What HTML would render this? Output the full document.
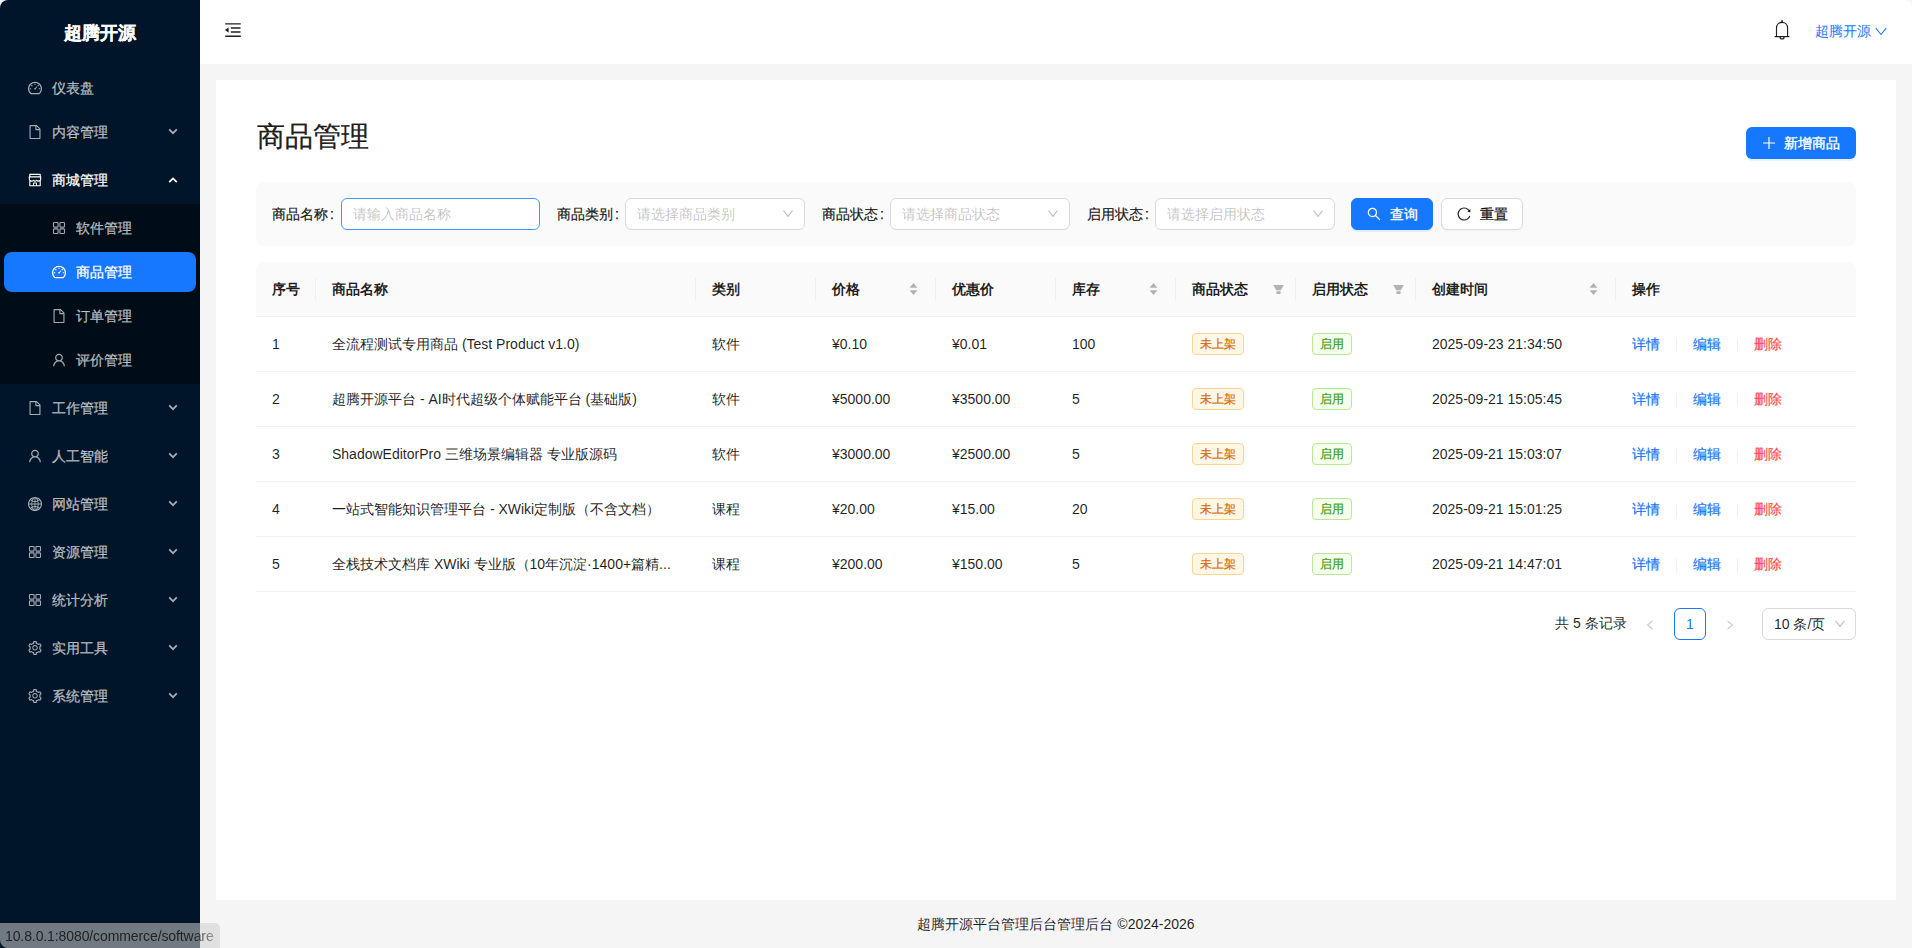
<!DOCTYPE html>
<html><head><meta charset="utf-8">
<style>
*{box-sizing:border-box;margin:0;padding:0}
html,body{width:1912px;height:948px;overflow:hidden;background:#f5f5f5;font-family:"Liberation Sans",sans-serif;font-size:14px;color:rgba(0,0,0,0.88)}
.abs{position:absolute}
svg{display:block}
#side{position:absolute;left:0;top:0;width:200px;height:948px;background:#001529;border-top-left-radius:8px;overflow:hidden}
#logo{position:absolute;left:0;top:0.5px;width:200px;height:64px;line-height:64px;text-align:center;color:#fff;font-size:18px;font-weight:bold;-webkit-text-stroke:0.2px #fff}
.mi{position:absolute;left:4px;width:192px;height:40px;line-height:40px;color:rgba(255,255,255,0.65);font-size:14px;-webkit-text-stroke:0.25px currentColor;border-radius:8px}
.mi .tx{position:absolute;top:0}
.mi.sel{background:#1677ff;color:#fff}
.mi.open{color:#fff}
#subbg{position:absolute;left:0;top:204px;width:200px;height:180px;background:#000c17}
#hdr{position:absolute;left:200px;top:0;width:1712px;height:64px;background:#fff;border-top-right-radius:8px}
#uname{position:absolute;left:1614.5px;top:20px;line-height:22px;color:#1677ff;font-size:14px}
#card{position:absolute;left:216px;top:80px;width:1680px;height:820px;background:#fff}
#title{position:absolute;left:41px;top:37px;font-size:28px;line-height:40px;color:rgba(0,0,0,0.88);-webkit-text-stroke:0.3px rgba(0,0,0,0.88)}
#addbtn{position:absolute;left:1530px;top:47px;width:110px;height:32px;background:#1677ff;border-radius:6px;color:#fff;line-height:32px;box-shadow:0 2px 0 rgba(5,145,255,0.1)}
#form{position:absolute;left:40px;top:102px;width:1600px;height:64px;background:#fafafa;border-radius:8px}
.lbl{position:absolute;top:21px;line-height:22px;color:rgba(0,0,0,0.88);-webkit-text-stroke:0.25px rgba(0,0,0,0.88)}
.inp{position:absolute;top:16px;height:32px;border:1px solid #d9d9d9;border-radius:6px;background:#fff}
.inp.focus{border-color:#4096ff}
.ph{position:absolute;left:11px;top:4px;line-height:22px;color:rgba(0,0,0,0.25)}
.btn{position:absolute;top:16px;height:32px;border-radius:6px;line-height:30px}
.bt{position:absolute;top:-0.5px;-webkit-text-stroke:0.3px currentColor}
.btn.pri{background:#1677ff;color:#fff;border:1px solid #1677ff;box-shadow:0 2px 0 rgba(5,145,255,0.1)}
.btn.def{background:#fff;border:1px solid #d9d9d9;color:rgba(0,0,0,0.88);box-shadow:0 2px 0 rgba(0,0,0,0.02)}
#table{position:absolute;left:40px;top:182px;width:1600px;height:330px}
#thead{position:absolute;left:0;top:0;width:1600px;height:55px;background:#fafafa;border-bottom:1px solid #f0f0f0;border-radius:8px 8px 0 0}
.th{position:absolute;top:16px;line-height:22px;font-weight:bold;color:rgba(0,0,0,0.88)}
.sep{position:absolute;top:16px;width:1px;height:22px;background:#f0f0f0}
.tr{position:absolute;left:0;width:1600px;height:55px;border-bottom:1px solid #f0f0f0}
.td{position:absolute;top:16px;line-height:22px;white-space:nowrap}
.link{color:#1677ff;-webkit-text-stroke:0.2px currentColor}
.link.red{color:#ff4d4f}
.vdiv{position:absolute;top:22px;width:1px;height:13px;background:rgba(5,5,5,0.06)}
.tag{position:absolute;top:16px;height:22px;line-height:20px;padding:0 7px;font-size:12px;border:1px solid;border-radius:4px;-webkit-text-stroke:0.2px currentColor}
.tag.orange{color:#d46b08;background:#fff7e6;border-color:#ffd591}
.tag.green{color:#389e0d;background:#f6ffed;border-color:#b7eb8f}
#pager{position:absolute;left:0;top:0}
.pg{position:absolute;line-height:22px}
#footer{position:absolute;left:200px;top:900px;width:1712px;height:48px;line-height:48px;text-align:center;font-size:14px;color:rgba(0,0,0,0.88)}
#status{position:absolute;left:0;top:923px;width:220px;height:25px;background:rgba(205,205,205,0.55);border-top-right-radius:5px;border-bottom-left-radius:8px;font-size:14px;line-height:26px;padding-left:5px;color:#222;white-space:nowrap;overflow:hidden}
</style></head>
<body>
<div id="side">
  <div id="logo">超腾开源</div>
  <div id="subbg"></div>
<div class="mi" style="top:68px"><svg class="abs" style="left:23px;top:12px;" width="16" height="16" viewBox="0 0 1024 1024" fill="currentColor"><path d="M924.8 385.6a446.7 446.7 0 00-96-142.4 446.7 446.7 0 00-142.4-96C631.1 123.8 572.5 112 512 112s-119.1 11.8-174.4 35.2a446.7 446.7 0 00-142.4 96 446.7 446.7 0 00-96 142.4C75.8 440.9 64 499.5 64 560c0 132.7 58.3 257.7 159.9 343.1l1.7 1.4c5.8 4.8 13.1 7.5 20.6 7.5h531.700c7.5 0 14.8-2.7 20.6-7.5l1.7-1.4C901.7 817.7 960 692.7 960 560c0-60.5-11.9-119.1-35.2-174.4zM761.4 836H262.6A371.12 371.12 0 01140 560c0-99.4 38.7-192.8 109-263 70.3-70.3 163.7-109 263-109 99.4 0 192.8 38.7 263 109 70.3 70.3 109 163.7 109 263 0 105.6-44.5 205.5-122.6 276zM623.5 421.5a8.03 8.03 0 00-11.3 0L527.7 506c-18.7-5-39.4-.2-54.1 14.5a55.95 55.95 0 000 79.2 55.95 55.95 0 0079.2 0 55.87 55.87 0 0014.5-54.1l84.5-84.5c3.1-3.1 3.1-8.2 0-11.3l-28.3-28.3zM490 320h44c4.4 0 8-3.6 8-8v-80c0-4.4-3.600-8-8-8h-44c-4.4 0-8 3.6-8 8v80c0 4.4 3.6 8 8 8zm260 218v44c0 4.4 3.6 8 8 8h80c4.4 0 8-3.6 8-8v-44c0-4.4-3.6-8-8-8h-80c-4.4 0-8 3.6-8 8zm12.7-197.2l-31.1-31.1a8.03 8.03 0 00-11.3 0l-56.6 56.6a8.03 8.03 0 000 11.3l31.1 31.1c3.1 3.1 8.2 3.1 11.3 0l56.6-56.6c3.1-3.1 3.1-8.2 0-11.3zm-458.6-31.1a8.03 8.03 0 00-11.3 0l-31.1 31.1a8.03 8.03 0 000 11.3l56.6 56.6c3.1 3.1 8.2 3.1 11.3 0l31.1-31.1c3.1-3.1 3.1-8.2 0-11.3l-56.6-56.6zM262 530h-80c-4.4 0-8 3.6-8 8v44c0 4.4 3.6 8 8 8h80c4.4 0 8-3.6 8-8v-44c0-4.4-3.6-8-8-8z"/></svg><span class="tx" style="left:48px">仪表盘</span></div>
<div class="mi" style="top:112px"><svg class="abs" style="left:23px;top:12px;" width="16" height="16" viewBox="0 0 1024 1024" fill="currentColor"><path d="M854.6 288.6L639.4 73.4c-6-6-14.1-9.4-22.6-9.4H192c-17.7 0-32 14.3-32 32v832c0 17.7 14.3 32 32 32h640c17.7 0 32-14.3 32-32V311.3c0-8.5-3.4-16.7-9.400-22.7zM790.2 326H602V137.8L790.2 326zm1.8 562H232V136h302v216a42 42 0 0042 42h216v494z"/></svg><span class="tx" style="left:48px">内容管理</span><svg class="abs" style="left:164px;top:15px" width="10" height="9" viewBox="0 0 10 9" fill="none" stroke="currentColor" stroke-width="1.8"><path d="M1.2 2.4 L5 6.2 L8.8 2.4"/></svg></div>
<div class="mi open" style="top:160px"><svg class="abs" style="left:23px;top:12px;" width="16" height="16" viewBox="0 0 1024 1024" fill="currentColor"><path d="M882 272.1V144c0-17.7-14.3-32-32-32H174c-17.7 0-32 14.3-32 32v128.1c-16.7 1-30 14.9-30 31.9v131.7a177 177 0 0014.4 70.4c4.3 10.2 9.6 19.8 15.6 28.9v345c0 17.6 14.3 32 32 32h676c17.7 0 32-14.3 32-32V535a175 175 0 0015.6-28.9c9.5-22.3 14.4-46 14.4-70.4V304c0-17-13.3-30.9-30-31.9zM214 184h596v88H214v-88zm362 656.1H448V736h128v104.1zm234 0H640V704c0-17.7-14.3-32-32-32H416c-17.7 0-32 14.3-32 32v136.1H214V597.9c2.9 1.4 5.9 2.8 9 4 22.3 9.4 46 14.1 70.4 14.1s48-4.7 70.4-14.1c13.8-5.8 26.8-13.2 38.7-22.1.2-.1.4-.1.6 0a180.4 180.4 0 0038.7 22.1c22.3 9.4 46 14.1 70.4 14.1 24.4 0 48-4.7 70.4-14.1 13.8-5.8 26.8-13.2 38.7-22.1.2-.1.4-.1.6 0a180.4 180.4 0 0038.7 22.1c22.3 9.4 46 14.1 70.4 14.1 24.4 0 48-4.7 70.4-14.1 3-1.3 6-2.6 9-4v242.2zm30-404.4c0 59.8-49 108.3-109.3 108.3-40.8 0-76.4-22.1-95.2-54.9-2.9-5-8.1-8.1-13.900-8.1h-.6c-5.7 0-11 3.1-13.9 8.1A109.24 109.24 0 01512 544c-40.7 0-76.2-22-95-54.7-3-5.1-8.4-8.3-14.3-8.3s-11.4 3.2-14.3 8.3a109.63 109.63 0 01-95.1 54.7C233 544 184 495.5 184 435.7v-91.2c0-.3.2-.5.5-.5h655c.3 0 .5.2.5.5v91.2z"/></svg><span class="tx" style="left:48px">商城管理</span><svg class="abs" style="left:164px;top:16px" width="10" height="9" viewBox="0 0 10 9" fill="none" stroke="currentColor" stroke-width="1.8"><path d="M1.2 6.2 L5 2.4 L8.8 6.2"/></svg></div>
<div class="mi" style="top:208px"><svg class="abs" style="left:48px;top:13px" width="14" height="14" viewBox="0 0 14 14" fill="none" stroke="currentColor" stroke-width="1.1"><rect x="1.5" y="1.5" width="4.6" height="4.6" rx="0.8"/><rect x="7.9" y="1.5" width="4.6" height="4.6" rx="0.8"/><rect x="1.5" y="7.9" width="4.6" height="4.6" rx="0.8"/><rect x="7.9" y="7.9" width="4.6" height="4.6" rx="0.8"/></svg><span class="tx" style="left:72px">软件管理</span></div>
<div class="mi sel" style="top:252px"><svg class="abs" style="left:47px;top:12px;" width="16" height="16" viewBox="0 0 1024 1024" fill="currentColor"><path d="M924.8 385.6a446.7 446.7 0 00-96-142.4 446.7 446.7 0 00-142.4-96C631.1 123.8 572.5 112 512 112s-119.1 11.8-174.4 35.2a446.7 446.7 0 00-142.4 96 446.7 446.7 0 00-96 142.4C75.8 440.9 64 499.5 64 560c0 132.7 58.3 257.7 159.9 343.1l1.7 1.4c5.8 4.8 13.1 7.5 20.6 7.5h531.700c7.5 0 14.8-2.7 20.6-7.5l1.7-1.4C901.7 817.7 960 692.7 960 560c0-60.5-11.9-119.1-35.2-174.4zM761.4 836H262.6A371.12 371.12 0 01140 560c0-99.4 38.7-192.8 109-263 70.3-70.3 163.7-109 263-109 99.4 0 192.8 38.7 263 109 70.3 70.3 109 163.7 109 263 0 105.6-44.5 205.5-122.6 276zM623.5 421.5a8.03 8.03 0 00-11.3 0L527.7 506c-18.7-5-39.4-.2-54.1 14.5a55.95 55.95 0 000 79.2 55.95 55.95 0 0079.2 0 55.87 55.87 0 0014.5-54.1l84.5-84.5c3.1-3.1 3.1-8.2 0-11.3l-28.3-28.3zM490 320h44c4.4 0 8-3.6 8-8v-80c0-4.4-3.600-8-8-8h-44c-4.4 0-8 3.6-8 8v80c0 4.4 3.6 8 8 8zm260 218v44c0 4.4 3.6 8 8 8h80c4.4 0 8-3.6 8-8v-44c0-4.4-3.6-8-8-8h-80c-4.4 0-8 3.6-8 8zm12.7-197.2l-31.1-31.1a8.03 8.03 0 00-11.3 0l-56.6 56.6a8.03 8.03 0 000 11.3l31.1 31.1c3.1 3.1 8.2 3.1 11.3 0l56.6-56.6c3.1-3.1 3.1-8.2 0-11.3zm-458.6-31.1a8.03 8.03 0 00-11.3 0l-31.1 31.1a8.03 8.03 0 000 11.3l56.6 56.6c3.1 3.1 8.2 3.1 11.3 0l31.1-31.1c3.1-3.1 3.1-8.2 0-11.3l-56.6-56.6zM262 530h-80c-4.4 0-8 3.6-8 8v44c0 4.4 3.6 8 8 8h80c4.4 0 8-3.6 8-8v-44c0-4.4-3.6-8-8-8z"/></svg><span class="tx" style="left:72px">商品管理</span></div>
<div class="mi" style="top:296px"><svg class="abs" style="left:47px;top:12px;" width="16" height="16" viewBox="0 0 1024 1024" fill="currentColor"><path d="M854.6 288.6L639.4 73.4c-6-6-14.1-9.4-22.6-9.4H192c-17.7 0-32 14.3-32 32v832c0 17.7 14.3 32 32 32h640c17.7 0 32-14.3 32-32V311.3c0-8.5-3.4-16.7-9.400-22.7zM790.2 326H602V137.8L790.2 326zm1.8 562H232V136h302v216a42 42 0 0042 42h216v494z"/></svg><span class="tx" style="left:72px">订单管理</span></div>
<div class="mi" style="top:340px"><svg class="abs" style="left:47px;top:12px;" width="16" height="16" viewBox="0 0 1024 1024" fill="currentColor"><path d="M858.5 763.6a374 374 0 00-80.6-119.5 375.63 375.63 0 00-119.5-80.6c-.4-.2-.8-.3-1.2-.5C719.5 518 760 444.7 760 362c0-137-111-248-248-248S264 225 264 362c0 82.7 40.5 156 102.8 201.1-.4.2-.8.3-1.2.5-44.8 18.9-85 46-119.5 80.6a375.63 375.63 0 00-80.6 119.5A371.7 371.7 0 00136 901.8a8 8 0 008 8.2h60c4.4 0 7.9-3.5 8-7.8 2-77.2 33-149.5 87.8-204.3 56.7-56.7 132-87.9 212.2-87.900s155.5 31.2 212.2 87.9C779 752.7 810 825 812 902.2c.1 4.4 3.6 7.8 8 7.8h60a8 8 0 008-8.2c-1-47.8-10.9-94.3-29.5-138.2zM512 534c-45.9 0-89.1-17.9-121.6-50.4S340 407.900 340 362c0-45.9 17.9-89.1 50.4-121.6S466.1 190 512 190s89.1 17.9 121.6 50.4S684 316.1 684 362c0 45.9-17.9 89.1-50.4 121.6S557.9 534 512 534z"/></svg><span class="tx" style="left:72px">评价管理</span></div>
<div class="mi" style="top:388px"><svg class="abs" style="left:23px;top:12px;" width="16" height="16" viewBox="0 0 1024 1024" fill="currentColor"><path d="M854.6 288.6L639.4 73.4c-6-6-14.1-9.4-22.6-9.4H192c-17.7 0-32 14.3-32 32v832c0 17.7 14.3 32 32 32h640c17.7 0 32-14.3 32-32V311.3c0-8.5-3.4-16.7-9.400-22.7zM790.2 326H602V137.8L790.2 326zm1.8 562H232V136h302v216a42 42 0 0042 42h216v494z"/></svg><span class="tx" style="left:48px">工作管理</span><svg class="abs" style="left:164px;top:15px" width="10" height="9" viewBox="0 0 10 9" fill="none" stroke="currentColor" stroke-width="1.8"><path d="M1.2 2.4 L5 6.2 L8.8 2.4"/></svg></div>
<div class="mi" style="top:436px"><svg class="abs" style="left:23px;top:12px;" width="16" height="16" viewBox="0 0 1024 1024" fill="currentColor"><path d="M858.5 763.6a374 374 0 00-80.6-119.5 375.63 375.63 0 00-119.5-80.6c-.4-.2-.8-.3-1.2-.5C719.5 518 760 444.7 760 362c0-137-111-248-248-248S264 225 264 362c0 82.7 40.5 156 102.8 201.1-.4.2-.8.3-1.2.5-44.8 18.9-85 46-119.5 80.6a375.63 375.63 0 00-80.6 119.5A371.7 371.7 0 00136 901.8a8 8 0 008 8.2h60c4.4 0 7.9-3.5 8-7.8 2-77.2 33-149.5 87.8-204.3 56.7-56.7 132-87.9 212.2-87.900s155.5 31.2 212.2 87.9C779 752.7 810 825 812 902.2c.1 4.4 3.6 7.8 8 7.8h60a8 8 0 008-8.2c-1-47.8-10.9-94.3-29.5-138.2zM512 534c-45.9 0-89.1-17.9-121.6-50.4S340 407.900 340 362c0-45.9 17.9-89.1 50.4-121.6S466.1 190 512 190s89.1 17.9 121.6 50.4S684 316.1 684 362c0 45.9-17.9 89.1-50.4 121.6S557.9 534 512 534z"/></svg><span class="tx" style="left:48px">人工智能</span><svg class="abs" style="left:164px;top:15px" width="10" height="9" viewBox="0 0 10 9" fill="none" stroke="currentColor" stroke-width="1.8"><path d="M1.2 2.4 L5 6.2 L8.8 2.4"/></svg></div>
<div class="mi" style="top:484px"><svg class="abs" style="left:23px;top:12px;" width="16" height="16" viewBox="0 0 1024 1024" fill="currentColor"><path d="M854.4 800.9c.2-.3.5-.6.7-.9C920.6 722.1 960 621.7 960 512s-39.4-210.1-104.8-288c-.2-.3-.5-.5-.7-.8-1.1-1.3-2.1-2.5-3.2-3.7-.4-.5-.8-.9-1.2-1.4l-4.1-4.7-.1-.1c-1.5-1.7-3.1-3.4-4.6-5.1l-.1-.1c-3.2-3.4-6.4-6.8-9.7-10.1l-.1-.1-4.8-4.8-.3-.3c-1.5-1.5-3-2.9-4.5-4.3-.5-.5-1-1-1.6-1.5-1-1-2-1.9-3-2.8-.3-.3-.7-.6-1-1C736.4 109.2 629.5 64 512 64s-224.4 45.2-304.3 119.2c-.3.3-.7.6-1 1-1 .9-2 1.9-3 2.9-.5.5-1 1-1.6 1.5-1.5 1.4-3 2.9-4.5 4.3l-.3.3-4.8 4.8-.1.1c-3.3 3.3-6.5 6.7-9.7 10.1l-.1.1c-1.6 1.7-3.1 3.4-4.6 5.1l-.1.1c-1.4 1.5-2.8 3.1-4.1 4.7-.4.5-.8.9-1.2 1.4-1.1 1.2-2.1 2.5-3.2 3.7-.2.3-.5.5-.7.8C103.4 301.9 64 402.3 64 512s39.4 210.1 104.8 288c.2.3.5.6.7.9l3.1 3.7c.4.5.8.9 1.2 1.4l4.1 4.7c0 .1.1.1.1.2 1.5 1.7 3 3.4 4.6 5l.1.1c3.2 3.4 6.4 6.8 9.6 10.1l.1.1c1.6 1.6 3.1 3.2 4.7 4.7l.3.3c3.3 3.3 6.7 6.5 10.1 9.6 80.1 74 187 119.2 304.5 119.2s224.4-45.2 304.3-119.2a300 300 0 0010-9.6l.3-.3c1.6-1.6 3.2-3.1 4.7-4.7l.1-.1c3.3-3.3 6.5-6.7 9.6-10.1l.1-.1c1.5-1.7 3.1-3.3 4.6-5 0-.1.1-.1.1-.2 1.4-1.5 2.8-3.1 4.1-4.7.4-.5.8-.9 1.2-1.4a99 99 0 003.3-3.7zm4.1-142.6c-13.8 32.6-32 62.8-54.2 90.2a444.07 444.07 0 00-81.5-55.9c11.6-46.9 18.8-98.4 20.7-152.6H887c-3 40.9-12.6 80.6-28.5 118.3zM887 484H743.5c-1.9-54.2-9.1-105.7-20.7-152.6 29.3-15.6 56.6-34.4 81.5-55.9A373.86 373.86 0 01887 484zM658.3 165.5c39.7 16.8 75.8 40 107.6 69.2a394.72 394.72 0 01-59.4 41.8c-15.7-45-35.8-84.1-59.2-115.4 3.7 1.4 7.4 2.9 11 4.4zm-90.6 700.6c-9.2 7.2-18.4 12.7-27.7 16.4V697a389.1 389.1 0 01115.7 26.2c-8.3 24.6-17.9 47.3-29 67.8-17.4 32.4-37.8 58.3-59 75.1zm59-633.1c11 20.6 20.7 43.3 29 67.8A389.1 389.1 0 01540 327V141.6c9.2 3.7 18.5 9.1 27.7 16.4 21.2 16.7 41.6 42.6 59 75zM540 640.9V540h147.5c-1.6 44.2-7.1 87.1-16.3 127.8l-.3 1.2A445.02 445.02 0 00540 640.9zm0-156.9V383.1c45.8-2.8 89.8-12.5 130.9-28.1l.3 1.2c9.2 40.7 14.7 83.5 16.3 127.8H540zm-56 56v100.9c-45.8 2.8-89.8 12.5-130.9 28.1l-.3-1.2c-9.2-40.7-14.7-83.5-16.3-127.8H484zm-147.5-56c1.6-44.2 7.1-87.1 16.3-127.8l.3-1.2c41.1 15.6 85 25.3 130.9 28.1V484H336.5zM484 697v185.4c-9.2-3.7-18.5-9.1-27.7-16.4-21.2-16.7-41.7-42.7-59.1-75.1-11-20.6-20.7-43.3-29-67.8 37.2-14.6 75.9-23.3 115.8-26.1zm0-370a389.1 389.1 0 01-115.7-26.2c8.3-24.6 17.9-47.3 29-67.8 17.4-32.4 37.8-58.4 59.1-75.1 9.2-7.2 18.4-12.7 27.7-16.4V327zM365.7 165.5c3.7-1.5 7.3-3 11-4.4-23.4 31.3-43.5 70.4-59.2 115.4-21-12-40.9-26-59.4-41.8 31.8-29.2 67.9-52.4 107.6-69.2zM165.5 365.7c13.8-32.6 32-62.8 54.2-90.2 24.9 21.5 52.2 40.3 81.5 55.9-11.6 46.9-18.8 98.4-20.7 152.6H137c3-40.9 12.6-80.6 28.5-118.3zM137 540h143.5c1.9 54.2 9.1 105.7 20.7 152.6a444.07 444.07 0 00-81.5 55.9A373.86 373.86 0 01137 540zm228.7 318.5c-39.7-16.8-75.8-40-107.6-69.2 18.5-15.8 38.4-29.7 59.4-41.8 15.7 45 35.8 84.1 59.2 115.4-3.7-1.4-7.4-2.9-11-4.4zm292.6 0c-3.7 1.5-7.3 3-11 4.4 23.4-31.3 43.5-70.4 59.2-115.4 21 12 40.9 26 59.4 41.8a373.810 373.81 0 01-107.6 69.2z"/></svg><span class="tx" style="left:48px">网站管理</span><svg class="abs" style="left:164px;top:15px" width="10" height="9" viewBox="0 0 10 9" fill="none" stroke="currentColor" stroke-width="1.8"><path d="M1.2 2.4 L5 6.2 L8.8 2.4"/></svg></div>
<div class="mi" style="top:532px"><svg class="abs" style="left:24px;top:13px" width="14" height="14" viewBox="0 0 14 14" fill="none" stroke="currentColor" stroke-width="1.1"><rect x="1.5" y="1.5" width="4.6" height="4.6" rx="0.8"/><rect x="7.9" y="1.5" width="4.6" height="4.6" rx="0.8"/><rect x="1.5" y="7.9" width="4.6" height="4.6" rx="0.8"/><rect x="7.9" y="7.9" width="4.6" height="4.6" rx="0.8"/></svg><span class="tx" style="left:48px">资源管理</span><svg class="abs" style="left:164px;top:15px" width="10" height="9" viewBox="0 0 10 9" fill="none" stroke="currentColor" stroke-width="1.8"><path d="M1.2 2.4 L5 6.2 L8.8 2.4"/></svg></div>
<div class="mi" style="top:580px"><svg class="abs" style="left:24px;top:13px" width="14" height="14" viewBox="0 0 14 14" fill="none" stroke="currentColor" stroke-width="1.1"><rect x="1.5" y="1.5" width="4.6" height="4.6" rx="0.8"/><rect x="7.9" y="1.5" width="4.6" height="4.6" rx="0.8"/><rect x="1.5" y="7.9" width="4.6" height="4.6" rx="0.8"/><rect x="7.9" y="7.9" width="4.6" height="4.6" rx="0.8"/></svg><span class="tx" style="left:48px">统计分析</span><svg class="abs" style="left:164px;top:15px" width="10" height="9" viewBox="0 0 10 9" fill="none" stroke="currentColor" stroke-width="1.8"><path d="M1.2 2.4 L5 6.2 L8.8 2.4"/></svg></div>
<div class="mi" style="top:628px"><svg class="abs" style="left:23px;top:12px;" width="16" height="16" viewBox="0 0 1024 1024" fill="currentColor"><path d="M924.8 625.7l-65.5-56c3.1-19 4.7-38.4 4.7-57.8s-1.6-38.8-4.7-57.8l65.5-56a32.03 32.03 0 009.3-35.2l-.9-2.6a443.74 443.74 0 00-79.7-137.9l-1.8-2.1a32.12 32.12 0 00-35.1-9.5l-81.3 28.9c-30-24.6-63.5-44-99.7-57.6l-15.7-85a32.05 32.05 0 00-25.8-25.7l-2.7-.5c-52.1-9.4-106.9-9.4-159 0l-2.7.5a32.05 32.05 0 00-25.8 25.7l-15.8 85.4a351.86 351.86 0 00-99 57.4l-81.9-29.1a32 32 0 00-35.1 9.5l-1.8 2.1a446.02 446.02 0 00-79.7 137.9l-.9 2.6c-4.5 12.5-.8 26.5 9.3 35.2l66.3 56.6c-3.1 18.8-4.6 38-4.6 57.1 0 19.2 1.5 38.4 4.6 57.1L99 625.5a32.03 32.03 0 00-9.3 35.2l.9 2.6c18.1 50.4 44.9 96.9 79.7 137.9l1.8 2.1a32.12 32.12 0 0035.1 9.5l81.9-29.1c29.8 24.5 63.1 43.9 99 57.4l15.8 85.4a32.05 32.05 0 0025.8 25.7l2.7.5a449.4 449.4 0 00159 0l2.7-.5a32.05 32.05 0 0025.8-25.7l15.7-85a350 350 0 0099.7-57.6l81.3 28.9a32 32 0 0035.1-9.5l1.8-2.1c34.8-41.1 61.6-87.5 79.7-137.9l.9-2.6c4.5-12.3.8-26.3-9.3-35zM788.3 465.9c2.5 15.1 3.8 30.6 3.8 46.1s-1.3 31-3.8 46.1l-6.6 40.1 74.7 63.9a370.03 370.03 0 01-42.6 73.6L721 702.8l-31.4 25.8c-23.9 19.6-50.5 35-79.3 45.8l-38.1 14.3-17.9 97a377.5 377.5 0 01-85 0l-17.9-97.2-37.8-14.5c-28.5-10.8-55-26.2-78.7-45.7l-31.4-25.9-93.4 33.2c-17-22.9-31.2-47.6-42.6-73.6l75.5-64.5-6.5-40c-2.4-14.9-3.7-30.3-3.7-45.5 0-15.3 1.2-30.6 3.7-45.5l6.5-40-75.5-64.5c11.3-26.1 25.6-50.7 42.6-73.6l93.4 33.2 31.4-25.9c23.7-19.5 50.2-34.9 78.7-45.7l37.9-14.3 17.9-97.2c28.1-3.2 56.8-3.2 85 0l17.9 97 38.1 14.3c28.7 10.8 55.4 26.2 79.3 45.8l31.4 25.8 92.8-32.9c17 22.9 31.2 47.6 42.6 73.6L781.8 426l6.5 39.9zM512 326c-97.2 0-176 78.8-176 176s78.8 176 176 176 176-78.8 176-176-78.8-176-176-176zm79.2 255.2A111.6 111.6 0 01512 614c-29.9 0-58-11.7-79.2-32.8A111.6 111.6 0 01400 502c0-29.9 11.7-58 32.8-79.2C454 401.6 482.1 390 512 390c29.9 0 58 11.6 79.2 32.8A111.6 111.6 0 01624 502c0 29.9-11.7 58-32.8 79.2z"/></svg><span class="tx" style="left:48px">实用工具</span><svg class="abs" style="left:164px;top:15px" width="10" height="9" viewBox="0 0 10 9" fill="none" stroke="currentColor" stroke-width="1.8"><path d="M1.2 2.4 L5 6.2 L8.8 2.4"/></svg></div>
<div class="mi" style="top:676px"><svg class="abs" style="left:23px;top:12px;" width="16" height="16" viewBox="0 0 1024 1024" fill="currentColor"><path d="M924.8 625.7l-65.5-56c3.1-19 4.7-38.4 4.7-57.8s-1.6-38.8-4.7-57.8l65.5-56a32.03 32.03 0 009.3-35.2l-.9-2.6a443.74 443.74 0 00-79.7-137.9l-1.8-2.1a32.12 32.12 0 00-35.1-9.5l-81.3 28.9c-30-24.6-63.5-44-99.7-57.6l-15.7-85a32.05 32.05 0 00-25.8-25.7l-2.7-.5c-52.1-9.4-106.9-9.4-159 0l-2.7.5a32.05 32.05 0 00-25.8 25.7l-15.8 85.4a351.86 351.86 0 00-99 57.4l-81.9-29.1a32 32 0 00-35.1 9.5l-1.8 2.1a446.02 446.02 0 00-79.7 137.9l-.9 2.6c-4.5 12.5-.8 26.5 9.3 35.2l66.3 56.6c-3.1 18.8-4.6 38-4.6 57.1 0 19.2 1.5 38.4 4.6 57.1L99 625.5a32.03 32.03 0 00-9.3 35.2l.9 2.6c18.1 50.4 44.9 96.9 79.7 137.9l1.8 2.1a32.12 32.12 0 0035.1 9.5l81.9-29.1c29.8 24.5 63.1 43.9 99 57.4l15.8 85.4a32.05 32.05 0 0025.8 25.7l2.7.5a449.4 449.4 0 00159 0l2.7-.5a32.05 32.05 0 0025.8-25.7l15.7-85a350 350 0 0099.7-57.6l81.3 28.9a32 32 0 0035.1-9.5l1.8-2.1c34.8-41.1 61.6-87.5 79.7-137.9l.9-2.6c4.5-12.3.8-26.3-9.3-35zM788.3 465.9c2.5 15.1 3.8 30.6 3.8 46.1s-1.3 31-3.8 46.1l-6.6 40.1 74.7 63.9a370.03 370.03 0 01-42.6 73.6L721 702.8l-31.4 25.8c-23.9 19.6-50.5 35-79.3 45.8l-38.1 14.3-17.9 97a377.5 377.5 0 01-85 0l-17.9-97.2-37.8-14.5c-28.5-10.8-55-26.2-78.7-45.7l-31.4-25.9-93.4 33.2c-17-22.9-31.2-47.6-42.6-73.6l75.5-64.5-6.5-40c-2.4-14.9-3.7-30.3-3.7-45.5 0-15.3 1.2-30.6 3.7-45.5l6.5-40-75.5-64.5c11.3-26.1 25.6-50.7 42.6-73.6l93.4 33.2 31.4-25.9c23.7-19.5 50.2-34.9 78.7-45.7l37.9-14.3 17.9-97.2c28.1-3.2 56.8-3.2 85 0l17.9 97 38.1 14.3c28.7 10.8 55.4 26.2 79.3 45.8l31.4 25.8 92.8-32.9c17 22.9 31.2 47.6 42.6 73.6L781.8 426l6.5 39.9zM512 326c-97.2 0-176 78.8-176 176s78.8 176 176 176 176-78.8 176-176-78.8-176-176-176zm79.2 255.2A111.6 111.6 0 01512 614c-29.9 0-58-11.7-79.2-32.8A111.6 111.6 0 01400 502c0-29.9 11.7-58 32.8-79.2C454 401.6 482.1 390 512 390c29.9 0 58 11.6 79.2 32.8A111.6 111.6 0 01624 502c0 29.9-11.7 58-32.8 79.2z"/></svg><span class="tx" style="left:48px">系统管理</span><svg class="abs" style="left:164px;top:15px" width="10" height="9" viewBox="0 0 10 9" fill="none" stroke="currentColor" stroke-width="1.8"><path d="M1.2 2.4 L5 6.2 L8.8 2.4"/></svg></div>
</div>
<div id="hdr">
<svg class="abs" style="left:23px;top:20px;" width="20" height="20" viewBox="0 0 1024 1024" fill="rgba(0,0,0,0.88)"><path d="M408 442h480c4.4 0 8-3.6 8-8v-56c0-4.4-3.6-8-8-8H408c-4.4 0-8 3.6-8 8v56c0 4.4 3.6 8 8 8zm-8 204c0 4.4 3.6 8 8 8h480c4.4 0 8-3.6 8-8v-56c0-4.4-3.6-8-8-8H408c-4.4 0-8 3.6-8 8v56zm504-486H120c-4.4 0-8 3.6-8 8v56c0 4.4 3.6 8 8 8h784c4.4 0 8-3.6 8-8v-56c0-4.4-3.6-8-8-8zm0 632H120c-4.4 0-8 3.6-8 8v56c0 4.4 3.6 8 8 8h784c4.4 0 8-3.6 8-8v-56c0-4.4-3.6-8-8-8zM115.4 518.9L271.7 642c5.8 4.6 14.4.5 14.4-6.9V388.9c0-7.4-8.5-11.5-14.4-6.9L115.4 505.1a8.74 8.74 0 000 13.8z"/></svg>
<svg class="abs" style="left:1566px;top:14px" width="32" height="32" viewBox="0 0 32 32" fill="none" stroke="rgba(0,0,0,0.88)" stroke-width="1.15"><path d="M10.5 22.6V14.2C10.5 10.8 12.9 8.4 16.05 8.4C19.2 8.4 21.6 10.8 21.6 14.2V22.6"/><path d="M8.6 22.6H23.4" stroke-width="1.25"/><path d="M16.05 6.2V8.4" stroke-width="1.6"/><path d="M14 22.9A2.05 2.05 0 0 0 18.1 22.9"/></svg>
<span id="uname">超腾开源</span>
<svg class="abs" style="left:1675px;top:27px" width="12" height="9" viewBox="0 0 12 9" fill="none" stroke="#1677ff" stroke-width="1.1"><path d="M0.8 1.2 L6 7.5 L11.2 1.2"/></svg>
</div>
<div id="card">
<div id="title">商品管理</div>
<div id="addbtn"><svg class="abs" style="left:16px;top:9px" width="14" height="14" viewBox="0 0 14 14" fill="none" stroke="#fff" stroke-width="1.2"><path d="M7 1v12M1 7h12"/></svg><span style="position:absolute;left:38px;top:0;-webkit-text-stroke:0.35px #fff">新增商品</span></div>
<div id="form">
<span class="lbl" style="left:16px">商品名称<span style="margin-left:2px">:</span></span>
<div class="inp focus" style="left:85px;width:199px"><span class="ph">请输入商品名称</span></div>
<span class="lbl" style="left:301px">商品类别<span style="margin-left:2px">:</span></span>
<div class="inp" style="left:369px;width:180px"><span class="ph">请选择商品类别</span><svg class="abs" style="left:157px;top:11px" width="10" height="7" viewBox="0 0 10 7" fill="none" stroke="rgba(0,0,0,0.25)" stroke-width="1.2"><path d="M0.5 0.5 L5.0 6.4 L9.5 0.5"/></svg></div>
<span class="lbl" style="left:566px">商品状态<span style="margin-left:2px">:</span></span>
<div class="inp" style="left:634px;width:180px"><span class="ph">请选择商品状态</span><svg class="abs" style="left:157px;top:11px" width="10" height="7" viewBox="0 0 10 7" fill="none" stroke="rgba(0,0,0,0.25)" stroke-width="1.2"><path d="M0.5 0.5 L5.0 6.4 L9.5 0.5"/></svg></div>
<span class="lbl" style="left:831px">启用状态<span style="margin-left:2px">:</span></span>
<div class="inp" style="left:899px;width:180px"><span class="ph">请选择启用状态</span><svg class="abs" style="left:157px;top:11px" width="10" height="7" viewBox="0 0 10 7" fill="none" stroke="rgba(0,0,0,0.25)" stroke-width="1.2"><path d="M0.5 0.5 L5.0 6.4 L9.5 0.5"/></svg></div>
<div class="btn pri" style="left:1095px;width:82px"><svg class="abs" style="left:14px;top:7px;" width="16" height="16" viewBox="0 0 1024 1024" fill="#fff"><path d="M909.6 854.5L649.9 594.8C690.2 542.7 712 479 712 412c0-80.2-31.3-155.4-87.9-212.1-56.6-56.7-132-87.9-212.1-87.9s-155.5 31.3-212.1 87.9C143.2 256.5 112 331.8 112 412c0 80.1 31.3 155.5 87.9 212.1C256.5 680.8 331.8 712 412 712c67 0 130.6-21.8 182.7-62l259.7 259.6a8.2 8.2 0 0011.6 0l43.6-43.5a8.2 8.2 0 000-11.6zM568.6 568.6C526.8 610.3 471.2 633 412 633s-114.8-22.7-156.6-64.4C213.7 526.8 191 471.2 191 412s22.7-114.8 64.4-156.6C297.2 213.7 352.8 191 412 191s114.8 22.7 156.6 64.4C610.3 297.2 633 352.8 633 412s-22.7 114.8-64.4 156.6z"/></svg><span class="bt" style="left:38px">查询</span></div>
<div class="btn def" style="left:1185px;width:82px"><svg class="abs" style="left:14px;top:7px;" width="16" height="16" viewBox="0 0 1024 1024" fill="rgba(0,0,0,0.88)"><path d="M909.1 209.3l-56.4 44.1C775.8 155.1 656.2 92 521.9 92 290 92 102.3 279.5 102 511.5 101.7 743.7 289.8 932 521.9 932c181.3 0 335.8-115 394.6-276.1 1.5-4.2-.7-8.9-4.9-10.3l-56.7-19.5a8 8 0 00-10.1 4.8c-1.8 5-3.8 10-5.9 14.9-17.3 41-42.1 77.8-73.7 109.4A344.77 344.77 0 01655.9 829c-42.3 17.9-87.4 27-133.8 27-46.5 0-91.5-9.1-133.8-27A341.5 341.5 0 01279 755.2a342.16 342.16 0 01-73.7-109.4c-17.9-42.4-27-87.4-27-133.9s9.1-91.5 27-133.9c17.3-41 42.1-77.8 73.7-109.4 31.6-31.6 68.4-56.4 109.3-73.8 42.3-17.9 87.4-27 133.8-27 46.5 0 91.5 9.1 133.8 27a341.5 341.5 0 01109.3 73.8c9.9 9.9 19.2 20.4 27.8 31.4l-60.2 47a8 8 0 003 14.1l175.6 43c5 1.2 9.9-2.6 9.9-7.7l.8-180.9c-.1-6.6-7.8-10.3-13-6.2z"/></svg><span class="bt" style="left:38px">重置</span></div>
</div>
<div id="table">
<div id="thead"></div>
<span class="th" style="left:16px">序号</span>
<div class="sep" style="left:59px"></div>
<span class="th" style="left:76px">商品名称</span>
<div class="sep" style="left:439px"></div>
<span class="th" style="left:456px">类别</span>
<div class="sep" style="left:559px"></div>
<span class="th" style="left:576px">价格</span>
<div class="sep" style="left:679px"></div>
<svg class="abs" style="left:652px;top:18px;" width="11" height="11" viewBox="0 0 1024 1024" fill="rgba(0,0,0,0.29)"><path d="M858.9 689L530.5 308.2c-9.4-10.9-27.5-10.9-37 0L165.1 689c-12.2 14.2-1.2 35 18.5 35h656.8c19.7 0 30.7-20.8 18.5-35z"/></svg>
<svg class="abs" style="left:652px;top:25.3px;" width="11" height="11" viewBox="0 0 1024 1024" fill="rgba(0,0,0,0.29)"><path d="M840.4 300H183.6c-19.7 0-30.7 20.8-18.5 35l328.4 380.8c9.4 10.9 27.5 10.9 37 0L858.9 335c12.2-14.2 1.2-35-18.5-35z"/></svg>
<span class="th" style="left:696px">优惠价</span>
<div class="sep" style="left:799px"></div>
<span class="th" style="left:816px">库存</span>
<div class="sep" style="left:919px"></div>
<svg class="abs" style="left:892px;top:18px;" width="11" height="11" viewBox="0 0 1024 1024" fill="rgba(0,0,0,0.29)"><path d="M858.9 689L530.5 308.2c-9.4-10.9-27.5-10.9-37 0L165.1 689c-12.2 14.2-1.2 35 18.5 35h656.8c19.7 0 30.7-20.8 18.5-35z"/></svg>
<svg class="abs" style="left:892px;top:25.3px;" width="11" height="11" viewBox="0 0 1024 1024" fill="rgba(0,0,0,0.29)"><path d="M840.4 300H183.6c-19.7 0-30.7 20.8-18.5 35l328.4 380.8c9.4 10.9 27.5 10.9 37 0L858.9 335c12.2-14.2 1.2-35-18.5-35z"/></svg>
<span class="th" style="left:936px">商品状态</span>
<div class="sep" style="left:1039px"></div>
<svg class="abs" style="left:1015.5px;top:20.5px;" width="13" height="13" viewBox="0 0 1024 1024" fill="rgba(0,0,0,0.29)"><path d="M349 838c0 17.7 14.2 32 31.8 32h262.4c17.6 0 31.8-14.3 31.8-32V642H349v196zm531.1-684H143.9c-24.5 0-39.8 26.7-27.5 48l221.3 376h348.8l221.3-376c12.1-21.3-3.2-48-27.7-48z"/></svg>
<span class="th" style="left:1056px">启用状态</span>
<div class="sep" style="left:1159px"></div>
<svg class="abs" style="left:1135.5px;top:20.5px;" width="13" height="13" viewBox="0 0 1024 1024" fill="rgba(0,0,0,0.29)"><path d="M349 838c0 17.7 14.2 32 31.8 32h262.4c17.6 0 31.8-14.3 31.8-32V642H349v196zm531.1-684H143.9c-24.5 0-39.8 26.7-27.5 48l221.3 376h348.8l221.3-376c12.1-21.3-3.2-48-27.7-48z"/></svg>
<span class="th" style="left:1176px">创建时间</span>
<div class="sep" style="left:1359px"></div>
<svg class="abs" style="left:1332px;top:18px;" width="11" height="11" viewBox="0 0 1024 1024" fill="rgba(0,0,0,0.29)"><path d="M858.9 689L530.5 308.2c-9.4-10.9-27.5-10.9-37 0L165.1 689c-12.2 14.2-1.2 35 18.5 35h656.8c19.7 0 30.7-20.8 18.5-35z"/></svg>
<svg class="abs" style="left:1332px;top:25.3px;" width="11" height="11" viewBox="0 0 1024 1024" fill="rgba(0,0,0,0.29)"><path d="M840.4 300H183.6c-19.7 0-30.7 20.8-18.5 35l328.4 380.8c9.4 10.9 27.5 10.9 37 0L858.9 335c12.2-14.2 1.2-35-18.5-35z"/></svg>
<span class="th" style="left:1376px">操作</span>
<div class="tr" style="top:55px">
<span class="td" style="left:16px">1</span>
<span class="td" style="left:76px">全流程测试专用商品 (Test Product v1.0)</span>
<span class="td" style="left:456px">软件</span>
<span class="td" style="left:576px">¥0.10</span>
<span class="td" style="left:696px">¥0.01</span>
<span class="td" style="left:816px">100</span>
<span class="tag orange" style="left:936px">未上架</span>
<span class="tag green" style="left:1056px">启用</span>
<span class="td" style="left:1176px">2025-09-23 21:34:50</span>
<span class="td link" style="left:1376px">详情</span>
<div class="vdiv" style="left:1420px"></div>
<span class="td link" style="left:1437px">编辑</span>
<div class="vdiv" style="left:1481px"></div>
<span class="td link red" style="left:1498px">删除</span>
</div>
<div class="tr" style="top:110px">
<span class="td" style="left:16px">2</span>
<span class="td" style="left:76px">超腾开源平台 - AI时代超级个体赋能平台 (基础版)</span>
<span class="td" style="left:456px">软件</span>
<span class="td" style="left:576px">¥5000.00</span>
<span class="td" style="left:696px">¥3500.00</span>
<span class="td" style="left:816px">5</span>
<span class="tag orange" style="left:936px">未上架</span>
<span class="tag green" style="left:1056px">启用</span>
<span class="td" style="left:1176px">2025-09-21 15:05:45</span>
<span class="td link" style="left:1376px">详情</span>
<div class="vdiv" style="left:1420px"></div>
<span class="td link" style="left:1437px">编辑</span>
<div class="vdiv" style="left:1481px"></div>
<span class="td link red" style="left:1498px">删除</span>
</div>
<div class="tr" style="top:165px">
<span class="td" style="left:16px">3</span>
<span class="td" style="left:76px">ShadowEditorPro 三维场景编辑器 专业版源码</span>
<span class="td" style="left:456px">软件</span>
<span class="td" style="left:576px">¥3000.00</span>
<span class="td" style="left:696px">¥2500.00</span>
<span class="td" style="left:816px">5</span>
<span class="tag orange" style="left:936px">未上架</span>
<span class="tag green" style="left:1056px">启用</span>
<span class="td" style="left:1176px">2025-09-21 15:03:07</span>
<span class="td link" style="left:1376px">详情</span>
<div class="vdiv" style="left:1420px"></div>
<span class="td link" style="left:1437px">编辑</span>
<div class="vdiv" style="left:1481px"></div>
<span class="td link red" style="left:1498px">删除</span>
</div>
<div class="tr" style="top:220px">
<span class="td" style="left:16px">4</span>
<span class="td" style="left:76px">一站式智能知识管理平台 - XWiki定制版（不含文档）</span>
<span class="td" style="left:456px">课程</span>
<span class="td" style="left:576px">¥20.00</span>
<span class="td" style="left:696px">¥15.00</span>
<span class="td" style="left:816px">20</span>
<span class="tag orange" style="left:936px">未上架</span>
<span class="tag green" style="left:1056px">启用</span>
<span class="td" style="left:1176px">2025-09-21 15:01:25</span>
<span class="td link" style="left:1376px">详情</span>
<div class="vdiv" style="left:1420px"></div>
<span class="td link" style="left:1437px">编辑</span>
<div class="vdiv" style="left:1481px"></div>
<span class="td link red" style="left:1498px">删除</span>
</div>
<div class="tr" style="top:275px">
<span class="td" style="left:16px">5</span>
<span class="td" style="left:76px">全栈技术文档库 XWiki 专业版（10年沉淀·1400+篇精...</span>
<span class="td" style="left:456px">课程</span>
<span class="td" style="left:576px">¥200.00</span>
<span class="td" style="left:696px">¥150.00</span>
<span class="td" style="left:816px">5</span>
<span class="tag orange" style="left:936px">未上架</span>
<span class="tag green" style="left:1056px">启用</span>
<span class="td" style="left:1176px">2025-09-21 14:47:01</span>
<span class="td link" style="left:1376px">详情</span>
<div class="vdiv" style="left:1420px"></div>
<span class="td link" style="left:1437px">编辑</span>
<div class="vdiv" style="left:1481px"></div>
<span class="td link red" style="left:1498px">删除</span>
</div>
</div>
<span class="pg" style="left:1339px;top:532px">共 5 条记录</span>
<svg class="abs" style="left:1428px;top:539px;" width="12" height="12" viewBox="0 0 1024 1024" fill="rgba(0,0,0,0.25)"><path d="M724 218.3V141c0-6.7-7.7-10.4-12.9-6.3L260.3 486.8a31.86 31.86 0 000 50.3l450.8 352.1c5.3 4.1 12.9.4 12.9-6.3v-77.3c0-4.9-2.3-9.6-6.1-12.6l-360-281 360-281.1c3.8-3 6.1-7.7 6.1-12.6z"/></svg>
<div class="abs" style="left:1458px;top:528px;width:32px;height:32px;border:1px solid #1677ff;border-radius:6px;color:#1677ff;text-align:center;line-height:30px">1</div>
<svg class="abs" style="left:1508px;top:539px;" width="12" height="12" viewBox="0 0 1024 1024" fill="rgba(0,0,0,0.25)"><path d="M765.7 486.8L314.9 134.7A7.97 7.97 0 00302 141v77.3c0 4.9 2.3 9.6 6.1 12.6l360 281.1-360 281.1c-3.9 3-6.1 7.7-6.1 12.6V883c0 6.6 7.6 10.3 12.9 6.3l450.8-352.1a31.96 31.96 0 000-50.4z"/></svg>
<div class="inp" style="left:1546px;top:528px;width:94px"><span class="ph" style="color:rgba(0,0,0,0.88)">10 条/页</span><svg class="abs" style="left:72px;top:11px" width="10" height="7" viewBox="0 0 10 7" fill="none" stroke="rgba(0,0,0,0.25)" stroke-width="1.2"><path d="M0.5 0.5 L5.0 6.4 L9.5 0.5"/></svg></div>
</div>
<div id="footer">超腾开源平台管理后台管理后台 ©2024-2026</div>
<div id="status"><span style="letter-spacing:-0.1px;-webkit-mask-image:linear-gradient(to right,#000 185px,rgba(0,0,0,0.3) 212px)">10.8.0.1:8080/commerce/software</span></div>
</body></html>
